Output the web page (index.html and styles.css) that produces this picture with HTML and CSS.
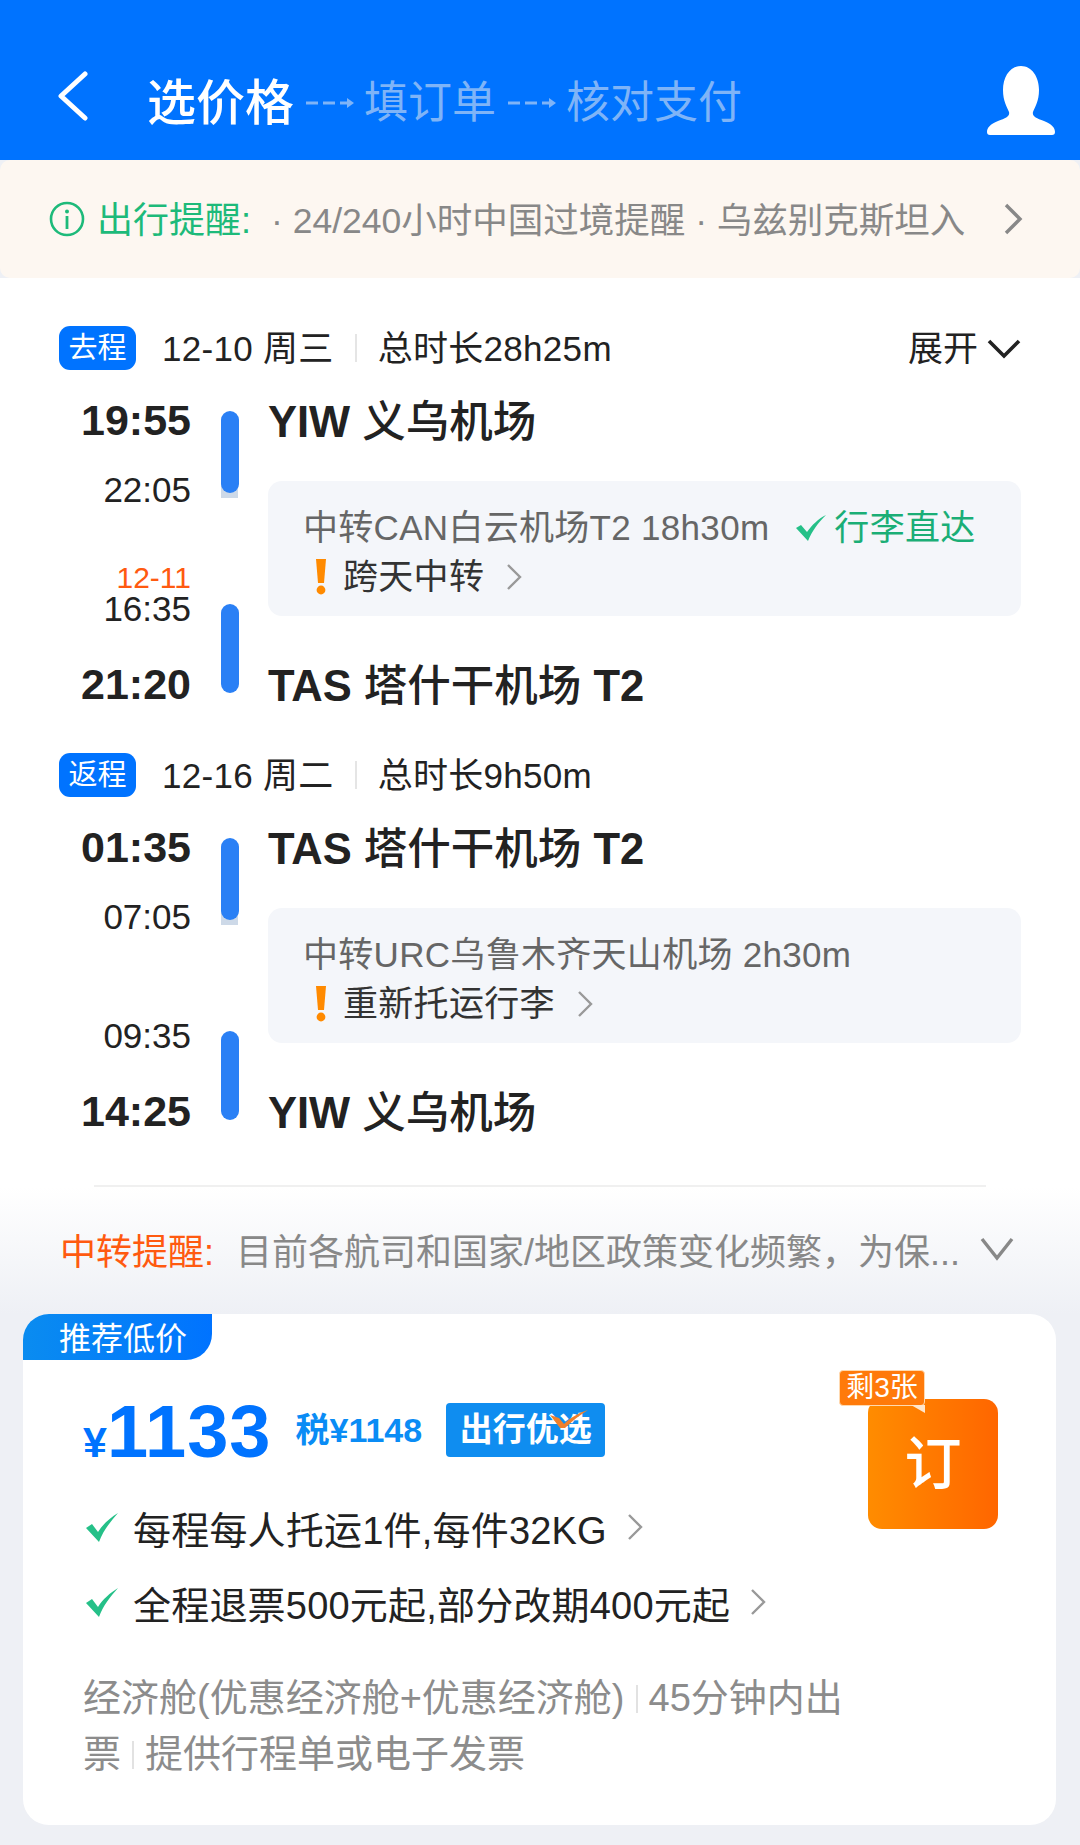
FILE: index.html
```html
<!DOCTYPE html>
<html lang="zh-CN">
<head>
    <meta charset="UTF-8">
    <meta name="viewport" content="width=device-width, initial-scale=1.0">
    <title>选价格</title>
    <link rel="stylesheet" href="styles.css">
</head>
<body>
    <!-- topo -->
    <header class="topbar">
        <svg class="back" width="32" height="50" viewBox="0 0 32 50"><path d="M28 3 L4 25 L28 47" fill="none" stroke="#fff" stroke-width="5" stroke-linecap="round" stroke-linejoin="round"/></svg>
        <span class="step-on">选价格</span>
        <svg class="step-arrow" width="48" height="14" viewBox="0 0 48 14"><path d="M0 7H12M17 7H29M34 7H42" stroke="#7fb4f7" stroke-width="3" fill="none"/><path d="M41 2L48 7L41 12Z" fill="#7fb4f7"/></svg>
        <span class="step-off">填订单</span>
        <svg class="step-arrow" width="48" height="14" viewBox="0 0 48 14"><path d="M0 7H12M17 7H29M34 7H42" stroke="#7fb4f7" stroke-width="3" fill="none"/><path d="M41 2L48 7L41 12Z" fill="#7fb4f7"/></svg>
        <span class="step-off">核对支付</span>
        <svg class="user" width="70" height="70" viewBox="0 0 70 70"><path d="M35 0C46 0 53 11 53 24C53 35 49 41 47 46C46 50 50 52 58 55C66 58 69 62 69 66Q69 69 66 69L4 69Q1 69 1 66C1 62 4 58 12 55C20 52 24 50 23 46C21 41 17 35 17 24C17 11 24 0 35 0Z" fill="#fff"/></svg>
    </header>

    <div class="notice">
        <svg class="notice-icon" width="36" height="36" viewBox="0 0 36 36"><circle cx="18" cy="18" r="16" fill="none" stroke="#1dba7a" stroke-width="2.6"/><circle cx="18" cy="10.5" r="2" fill="#1dba7a"/><rect x="16.6" y="15" width="2.8" height="13" fill="#1dba7a"/></svg>
        <span class="notice-title">出行提醒:</span>
        <span class="notice-text">· 24/240小时中国过境提醒 · 乌兹别克斯坦入</span>
        <svg class="notice-more" width="20" height="32" viewBox="0 0 20 32"><path d="M3 2L17 16L3 30" fill="none" stroke="#888" stroke-width="3.4"/></svg>
    </div>

    <section class="flights">
        <!-- ida -->
        <div class="leg">
            <div class="leg-head">
                <span class="leg-badge">去程</span>
                <span class="leg-date">12-10 周三</span>
                <i class="leg-sep"></i>
                <span class="leg-total">总时长28h25m</span>
                <span class="leg-open">展开
                    <svg width="34" height="20" viewBox="0 0 34 20"><path d="M2 2L17 17L32 2" fill="none" stroke="#222" stroke-width="3.6"/></svg>
                </span>
            </div>
            <div class="leg-body">
                <div class="times">
                    <div class="time-main">19:55</div>
                    <div class="time-sub first">22:05</div>
                    <div class="time-date">12-11</div>
                    <div class="time-sub">16:35</div>
                    <div class="time-main last">21:20</div>
                </div>
                <div class="bars">
                    <div class="bar bar-a"></div>
                    <div class="bar bar-b"></div>
                </div>
                <div class="route">
                    <div class="airport"><b>YIW</b> 义乌机场</div>
                    <div class="transfer">
                        <div class="transfer-line">
                            中转CAN白云机场T2 18h30m
                            <svg class="transfer-check" width="30" height="26" viewBox="0 0 30 26"><path d="M0 13L5 10L11 17C16 10 22 4 30 0C22 8 16 16 12 26Z" fill="#25c088"/></svg>
                            <span class="green">行李直达</span>
                        </div>
                        <div class="transfer-line dark">
                            <svg class="warn" width="12" height="36" viewBox="0 0 12 36"><path d="M1 0H11L9 24H3Z" fill="#ff8a00"/><circle cx="6" cy="31" r="4.4" fill="#ff8a00"/></svg>
                            跨天中转
                            <svg class="transfer-more" width="16" height="28" viewBox="0 0 16 28"><path d="M2 2L14 14L2 26" fill="none" stroke="#999" stroke-width="2.4"/></svg>
                        </div>
                    </div>
                    <div class="airport last"><b>TAS</b> 塔什干机场 <b>T2</b></div>
                </div>
            </div>
        </div>

        <!-- volta -->
        <div class="leg">
            <div class="leg-head">
                <span class="leg-badge">返程</span>
                <span class="leg-date">12-16 周二</span>
                <i class="leg-sep"></i>
                <span class="leg-total">总时长9h50m</span>
            </div>
            <div class="leg-body">
                <div class="times">
                    <div class="time-main">01:35</div>
                    <div class="time-sub first">07:05</div>
                    <div class="time-date"></div>
                    <div class="time-sub">09:35</div>
                    <div class="time-main last">14:25</div>
                </div>
                <div class="bars">
                    <div class="bar bar-a"></div>
                    <div class="bar bar-b"></div>
                </div>
                <div class="route">
                    <div class="airport"><b>TAS</b> 塔什干机场 <b>T2</b></div>
                    <div class="transfer">
                        <div class="transfer-line">中转URC乌鲁木齐天山机场 2h30m</div>
                        <div class="transfer-line dark">
                            <svg class="warn" width="12" height="36" viewBox="0 0 12 36"><path d="M1 0H11L9 24H3Z" fill="#ff8a00"/><circle cx="6" cy="31" r="4.4" fill="#ff8a00"/></svg>
                            重新托运行李
                            <svg class="transfer-more" width="16" height="28" viewBox="0 0 16 28"><path d="M2 2L14 14L2 26" fill="none" stroke="#999" stroke-width="2.4"/></svg>
                        </div>
                    </div>
                    <div class="airport last"><b>YIW</b> 义乌机场</div>
                </div>
            </div>
        </div>
        <div class="flights-line"></div>
    </section>

    <div class="tip">
        <span class="tip-title">中转提醒:</span>
        <span class="tip-text">目前各航司和国家/地区政策变化频繁，为保...</span>
        <svg class="tip-more" width="34" height="24" viewBox="0 0 34 24"><path d="M2 2L17 21L32 2" fill="none" stroke="#888" stroke-width="3.4"/></svg>
    </div>

    <!-- cartao de preco -->
    <div class="offer">
        <div class="offer-tag">推荐低价</div>
        <div class="offer-body">
            <div class="offer-info">
                <div class="price-row">
                    <span class="price"><small>¥</small>1133</span>
                    <span class="tax">税¥1148</span>
                    <span class="choice">出行优选
                        <svg class="choice-mark" width="38" height="18" viewBox="0 0 38 18"><path d="M0 5L9 8L14 14C20 8 28 3 38 0C30 5 22 11 15 18L10 18Z" fill="#f0802c"/></svg>
                    </span>
                </div>
                <div class="perk first">
                    <svg class="perk-check" width="32" height="29" viewBox="0 0 32 29"><path d="M0 15L6 11L12 19C17 11 24 5 32 0C24 9 17 18 13 29Z" fill="#25c088"/></svg>
                    每程每人托运1件,每件32KG
                    <svg class="perk-more" width="16" height="28" viewBox="0 0 16 28"><path d="M2 2L14 14L2 26" fill="none" stroke="#999" stroke-width="2.4"/></svg>
                </div>
                <div class="perk">
                    <svg class="perk-check" width="32" height="29" viewBox="0 0 32 29"><path d="M0 15L6 11L12 19C17 11 24 5 32 0C24 9 17 18 13 29Z" fill="#25c088"/></svg>
                    全程退票500元起,部分改期400元起
                    <svg class="perk-more" width="16" height="28" viewBox="0 0 16 28"><path d="M2 2L14 14L2 26" fill="none" stroke="#999" stroke-width="2.4"/></svg>
                </div>
            </div>
            <div class="book">
                <span class="book-left">剩3张</span>
                订
            </div>
        </div>
        <p class="offer-desc">经济舱(优惠经济舱+优惠经济舱)<i class="desc-sep"></i>45分钟内出<br>票<i class="desc-sep"></i>提供行程单或电子发票</p>
    </div>
</body>
</html>
```

FILE: styles.css
```css
body {
    margin: 0;
    width: 1080px;
    height: 1845px;
    overflow: hidden;
    background-color: #eef0f5;
    font-family: "Liberation Sans", "Noto Sans CJK SC", sans-serif;
    color: #222;
}

/* topo */
.topbar {
    height: 160px;
    box-sizing: border-box;
    padding: 71px 24px 0 57px;
    background-color: #0073ff;
    display: flex;
    align-items: flex-start;
}
.back {
    margin-right: 58px;
}
.step-on {
    margin-top: 2px;
    font-size: 49px;
    line-height: 60px;
    font-weight: 500;
    color: #fff;
}
.step-off {
    margin-top: 2px;
    font-size: 44px;
    line-height: 60px;
    color: #7fb4f7;
}
.step-arrow {
    margin: 25px 10px 0 12px;
}
.user {
    margin-left: auto;
    margin-top: -5px;
}

/* aviso */
.notice {
    height: 118px;
    box-sizing: border-box;
    padding: 0 57px 4px 49px;
    background-color: #fdf7f1;
    border-radius: 10px;
    display: flex;
    align-items: center;
    white-space: nowrap;
}
.notice-icon {
    margin-right: 12px;
    margin-top: 4px;
}
.notice-title {
    font-size: 36px;
    color: #1dba7a;
    margin-right: 20px;
}
.notice-text {
    font-size: 35.5px;
    color: #888;
}
.notice-more {
    margin-left: auto;
    margin-top: 4px;
}

/* voos */
.flights {
    background-color: #fff;
    padding: 48px 59px 0;
}
.leg {
    margin-bottom: 43px;
}
.leg:last-of-type {
    margin-bottom: 0;
}
.leg-head {
    height: 44px;
    margin-bottom: 24px;
    display: flex;
    align-items: center;
    font-size: 35px;
    letter-spacing: 0.3px;
    white-space: nowrap;
}
.leg-date,
.leg-total {
    position: relative;
    top: -3px;
}
.leg-badge {
    width: 77px;
    height: 44px;
    line-height: 44px;
    text-align: center;
    font-size: 29px;
    letter-spacing: 0;
    color: #fff;
    background-color: #0073ff;
    border-radius: 11px;
    margin-right: 26px;
}
.leg-sep {
    width: 2px;
    height: 28px;
    background-color: #e5e5e5;
    margin: 0 21px;
}
.leg-open {
    margin-left: auto;
    display: flex;
    align-items: center;
    gap: 9px;
    letter-spacing: 0;
    line-height: 40px;
    margin-top: 2px;
}
.leg-body {
    display: flex;
}
.times {
    width: 132px;
    text-align: right;
    flex: none;
}
.time-main {
    font-size: 43px;
    line-height: 52px;
    font-weight: bold;
}
.time-main.last {
    margin-top: 30px;
}
.time-sub {
    font-size: 35px;
    line-height: 38px;
}
.time-sub.first {
    margin-top: 25px;
}
.time-date {
    height: 24px;
    margin-top: 57px;
    font-size: 30px;
    line-height: 24px;
    color: #ff5a10;
}
.bars {
    position: relative;
    z-index: 0;
    width: 18px;
    flex: none;
    margin: 17px 29px 0 30px;
}
.bar {
    position: relative;
    width: 18px;
    border-radius: 9px;
    background-color: #2a80f5;
}
.bar-a {
    height: 82px;
}
.bar-a::after {
    content: "";
    position: absolute;
    z-index: -1;
    left: 0;
    bottom: -5px;
    width: 17px;
    height: 20px;
    background-color: #cdd9e8;
}
.bar-b {
    height: 89px;
    margin-top: 111px;
}
.route {
    flex: 1;
}
.airport {
    padding-top: 2px;
    height: 50px;
    font-size: 43.5px;
    line-height: 52px;
    font-weight: 500;
    white-space: nowrap;
}
.airport.last {
    margin-top: 42px;
}
.transfer {
    height: 135px;
    box-sizing: border-box;
    margin-top: 35px;
    padding: 22px 0 0 35px;
    background-color: #f4f6fa;
    border-radius: 14px;
    font-size: 35px;
    letter-spacing: 0.3px;
    color: #666;
}
.transfer-line {
    height: 49px;
    line-height: 49px;
    display: flex;
    align-items: center;
    white-space: nowrap;
}
.transfer-line.dark {
    color: #333;
}
.transfer-check {
    margin: 0 8px 0 27px;
}
.green {
    color: #1aae76;
}
.warn {
    margin: 0 16px 0 12px;
}
.transfer-more {
    margin-left: 22px;
}
.flights-line {
    height: 2px;
    background-color: #f0f0f0;
    margin: 48px 35px 0;
}

/* lembrete */
.tip {
    height: 127px;
    box-sizing: border-box;
    padding: 0 66px 3px 60px;
    background: linear-gradient(#fff, #eef0f5);
    display: flex;
    align-items: center;
    white-space: nowrap;
    font-size: 36px;
}
.tip-title {
    color: #ff5a10;
    margin-right: 22px;
}
.tip-text {
    color: #888;
}
.tip-more {
    margin-left: auto;
}

/* oferta */
.offer {
    width: 1033px;
    height: 511px;
    margin: 0 0 0 23px;
    background-color: #fff;
    border-radius: 26px;
}
.offer-tag {
    width: 189px;
    height: 46px;
    line-height: 50px;
    box-sizing: border-box;
    padding-left: 36px;
    font-size: 32px;
    color: #fff;
    background: linear-gradient(90deg, #0a8cf0, #0073ff);
    border-radius: 26px 0 26px 0;
}
.offer-body {
    display: flex;
    justify-content: space-between;
}
.offer-info {
    padding: 34px 0 0 60px;
}
.price-row {
    height: 72px;
    display: flex;
    align-items: center;
    white-space: nowrap;
}
.price {
    padding-top: 13px;
    font-size: 74px;
    line-height: 72px;
    font-weight: bold;
    letter-spacing: 1px;
    color: #0073ff;
}
.price small {
    font-size: 43px;
    letter-spacing: 0;
}
.tax {
    margin: 0 0 6px 24px;
    font-size: 34px;
    font-weight: bold;
    color: #0a8cf5;
}
.choice {
    position: relative;
    margin-left: 24px;
    width: 159px;
    height: 54px;
    line-height: 54px;
    text-align: center;
    font-size: 33px;
    font-weight: bold;
    color: #fff;
    background-color: #0f8df0;
    border-radius: 4px;
}
.choice-mark {
    position: absolute;
    top: 7px;
    right: 17px;
}
.perk {
    height: 50px;
    margin-top: 25px;
    padding-left: 1px;
    display: flex;
    align-items: center;
    font-size: 38px;
    letter-spacing: 0.2px;
    white-space: nowrap;
}
.perk.first {
    margin-top: 36px;
}
.perk-check {
    margin: 0 15px 0 2px;
}
.perk-more {
    margin-left: 20px;
}
.book {
    position: relative;
    width: 130px;
    height: 130px;
    margin: 39px 58px 0 0;
    line-height: 130px;
    text-align: center;
    font-size: 57px;
    font-weight: 500;
    color: #fff;
    background: linear-gradient(90deg, #ff8c00, #ff6600);
    border-radius: 14px;
}
.book-left {
    position: absolute;
    top: -29px;
    left: -29px;
    width: 84px;
    height: 34px;
    line-height: 34px;
    font-size: 28px;
    font-weight: normal;
    white-space: nowrap;
    background-color: #ff7a0a;
    border: 1px solid #ffd9b0;
    border-radius: 4px;
}
/* ponta branca da etiqueta */
.book-left::after {
    content: "";
    position: absolute;
    right: -1px;
    bottom: -8px;
    width: 0;
    height: 0;
    border-top: 8px solid #ffe6cc;
    border-left: 14px solid transparent;
}
.offer-desc {
    margin: 43px 0 0 60px;
    font-size: 38px;
    line-height: 56px;
    color: #8c8c8c;
    white-space: nowrap;
}
.desc-sep {
    display: inline-block;
    width: 2px;
    height: 28px;
    margin: 0 11px;
    background-color: #e2e2e2;
    vertical-align: -2px;
}
```
